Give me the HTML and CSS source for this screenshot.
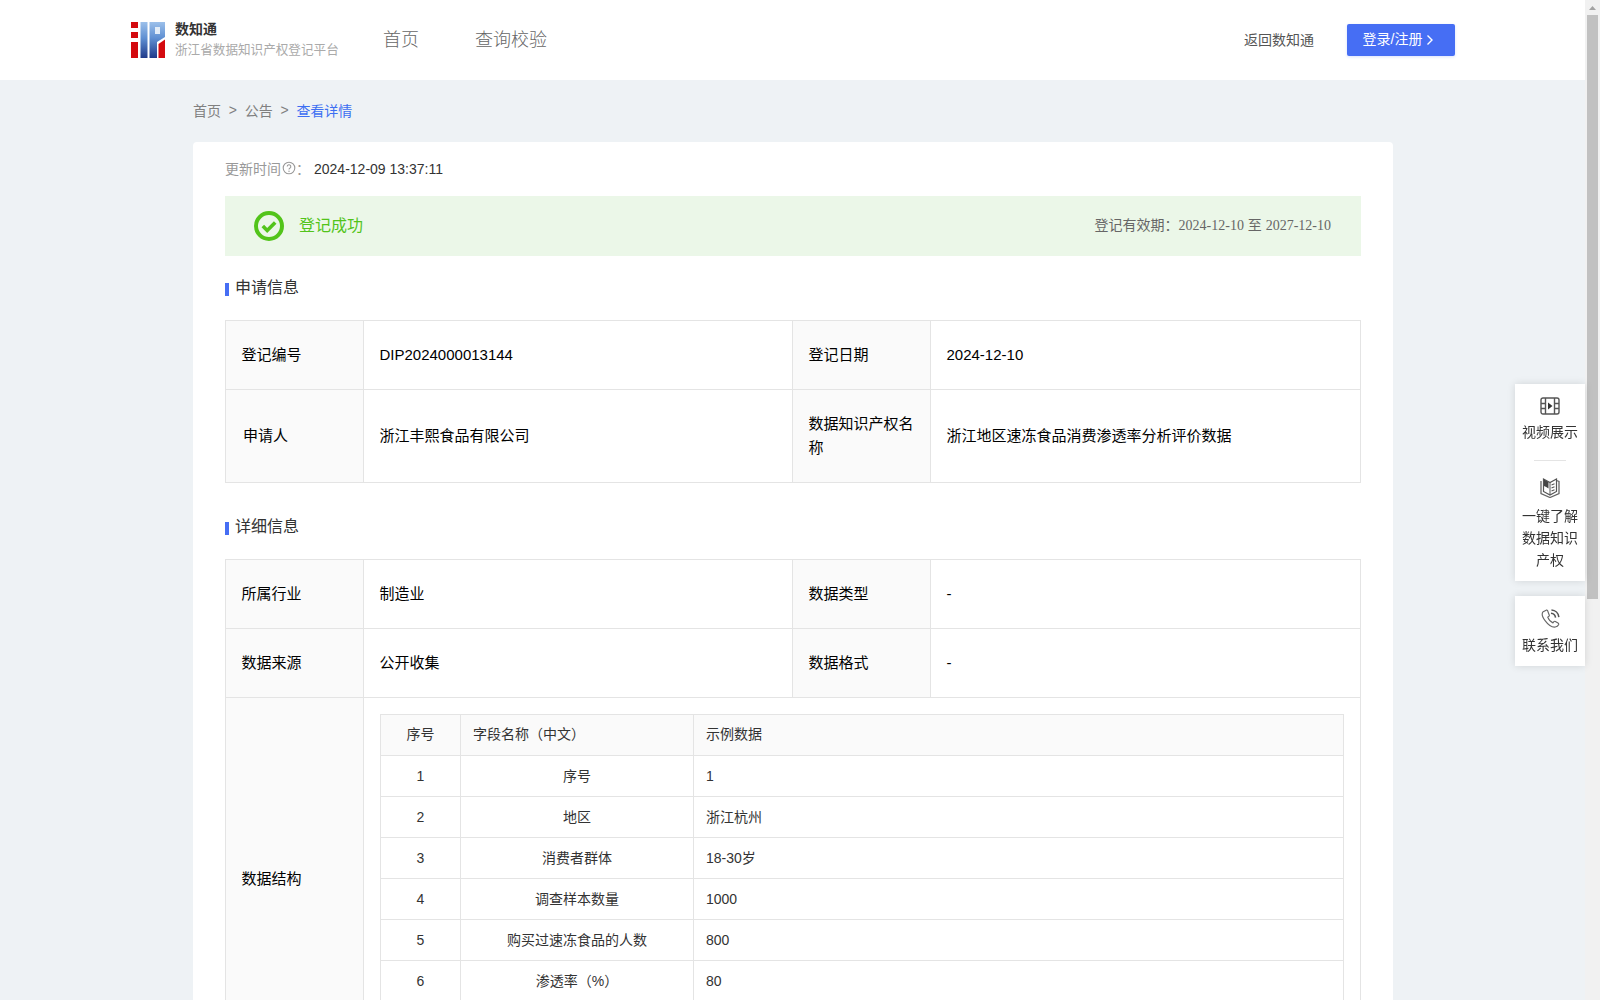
FILE: index.html
```html
<!DOCTYPE html>
<html lang="zh-CN">
<head>
<meta charset="utf-8">
<title>查看详情</title>
<link rel="stylesheet" href="styles.css">
</head>
<body>
<div class="viewport">
  <div class="page">
    <header class="header">
      <div class="brand">
        <svg class="logo" viewBox="0 0 34 36" width="34" height="36">
          <defs>
            <linearGradient id="lg" x1="0" y1="0" x2="0" y2="1">
              <stop offset="0" stop-color="#9cc0ea"/>
              <stop offset="0.45" stop-color="#5f8fd2"/>
              <stop offset="1" stop-color="#1f3a8a"/>
            </linearGradient>
            <linearGradient id="lg2" gradientUnits="userSpaceOnUse" x1="0" y1="0" x2="0" y2="36">
              <stop offset="0" stop-color="#9cc0ea"/>
              <stop offset="0.45" stop-color="#5f8fd2"/>
              <stop offset="1" stop-color="#1f3a8a"/>
            </linearGradient>
          </defs>
          <rect x="0" y="0" width="7" height="6" fill="#d40a0f"/>
          <rect x="0" y="10" width="7" height="6" fill="#d40a0f"/>
          <rect x="0" y="20" width="7" height="16" fill="#d40a0f"/>
          <rect x="9.500" y="0" width="7" height="36" fill="url(#lg)"/>
          <path d="M18.500 0H34V15L26 20V36H18.500Z" fill="url(#lg2)"/>
          <rect x="24" y="5" width="5" height="7" fill="#e3edf8"/>
          <path d="M27.500 36V22L34 17.500V36Z" fill="#d40a0f"/>
        </svg>
        <div class="brand-text">
          <div class="brand-name">数知通</div>
          <div class="brand-sub">浙江省数据知识产权登记平台</div>
        </div>
      </div>
      <nav class="nav">
        <a class="nav-item">首页</a>
        <a class="nav-item">查询校验</a>
      </nav>
      <div class="header-right">
        <a class="back-link">返回数知通</a>
        <button class="login-btn"><span class="login-text">登录/注册</span>
          <svg viewBox="0 0 8 12" width="8" height="12"><path d="M1.500 1.500 6 6l-4.500 4.500" fill="none" stroke="#fff" stroke-width="1.4"/></svg>
        </button>
      </div>
    </header>

    <main class="content">
      <div class="crumbs">
        <span>首页</span><span class="sep">&gt;</span><span>公告</span><span class="sep">&gt;</span><span class="crumb-now">查看详情</span>
      </div>

      <section class="card">
        <div class="updated">
          <span class="updated-label">更新时间</span>
          <svg class="help" viewBox="0 0 14 14" width="14" height="14"><circle cx="7" cy="7" r="5.800" fill="none" stroke="#999" stroke-width="1.100"/><path d="M5.200 5.600a1.800 1.800 0 1 1 2.600 1.600c-.6.3-.8.6-.8 1.200" fill="none" stroke="#999" stroke-width="1.100"/><circle cx="7" cy="10.200" r=".7" fill="#999"/></svg>
          <span class="updated-label">：</span>
          <span class="updated-value">2024-12-09 13:37:11</span>
        </div>

        <div class="status">
          <div class="status-main">
            <svg viewBox="0 0 30 30" width="30" height="30"><circle cx="15" cy="15" r="13" fill="none" stroke="#52c41a" stroke-width="4"/><path d="M8.800 15l4.400 4.400 8-8" fill="none" stroke="#52c41a" stroke-width="3.600"/></svg>
            <span class="status-text">登记成功</span>
          </div>
          <div class="status-date">登记有效期：<span class="serif">2024-12-10</span> 至 <span class="serif">2027-12-10</span></div>
        </div>

        <h3 class="section-title">申请信息</h3>
        <table class="info">
          <colgroup><col class="c-label"><col class="c-val"><col class="c-label"><col></colgroup>
          <tr>
            <th>登记编号</th><td>DIP2024000013144</td>
            <th>登记日期</th><td>2024-12-10</td>
          </tr>
          <tr>
            <th class="nudge">申请人</th><td>浙江丰熙食品有限公司</td>
            <th>数据知识产权名称</th><td>浙江地区速冻食品消费渗透率分析评价数据</td>
          </tr>
        </table>

        <h3 class="section-title second">详细信息</h3>
        <table class="info">
          <colgroup><col class="c-label"><col class="c-val"><col class="c-label"><col></colgroup>
          <tr>
            <th>所属行业</th><td>制造业</td>
            <th>数据类型</th><td>-</td>
          </tr>
          <tr>
            <th>数据来源</th><td>公开收集</td>
            <th>数据格式</th><td>-</td>
          </tr>
          <tr>
            <th>数据结构</th>
            <td colspan="3" class="nested-cell">
              <table class="fields">
                <colgroup><col class="f-no"><col class="f-name"><col></colgroup>
                <tr class="f-head"><th>序号</th><th class="left">字段名称（中文）</th><th class="left">示例数据</th></tr>
                <tr><td>1</td><td>序号</td><td class="left">1</td></tr>
                <tr><td>2</td><td>地区</td><td class="left">浙江杭州</td></tr>
                <tr><td>3</td><td>消费者群体</td><td class="left">18-30岁</td></tr>
                <tr><td>4</td><td>调查样本数量</td><td class="left">1000</td></tr>
                <tr><td>5</td><td>购买过速冻食品的人数</td><td class="left">800</td></tr>
                <tr><td>6</td><td>渗透率（%）</td><td class="left">80</td></tr>
                <tr><td>&nbsp;</td><td></td><td class="left"></td></tr>
              </table>
            </td>
          </tr>
        </table>
      </section>
    </main>
  </div>

  <div class="scrollbar">
    <div class="sb-arrow"><svg viewBox="0 0 7 4" width="7" height="4"><path d="M3.500 0 7 4H0Z" fill="#a3a3a3"/></svg></div>
    <div class="sb-thumb"></div>
  </div>
</div>

<aside class="float">
  <div class="float-box">
    <a class="float-item">
      <svg viewBox="0 0 20 18" width="20" height="18"><rect x="1" y="1" width="18" height="16" rx="2" fill="none" stroke="#555" stroke-width="1.400"/><path d="M5.500 1v16M14.500 1v16M1 6.500h4.500M1 11.500h4.500M14.500 6.500H19M14.500 11.500H19" stroke="#555" stroke-width="1.400" fill="none"/><path d="M8 5.500l4.500 3.500L8 12.500Z" fill="#333"/></svg>
      <span>视频展示</span>
    </a>
    <div class="float-line"></div>
    <a class="float-item">
      <svg class="book" viewBox="0 0 20 20" width="20" height="20"><path d="M1 3v12.500L10 19.500l9-4V3.500L16.500 2.500" fill="none" stroke="#666" stroke-width="1.300"/><path d="M3.500 1 10 4.500 16.500 1v12.500L10 17 3.500 13.500Z" fill="#fff" stroke="#555" stroke-width="1.200"/><path d="M10 4.500V17" stroke="#555" stroke-width="1"/><path d="M4 1.500 8.500 4v6.500L6.200 9 4 8Z" fill="#444"/><path d="M11.500 7l3-1.200M11.500 10l3-1.200M11.500 13l3-1.200" stroke="#555" stroke-width="1.100" fill="none"/></svg>
      <span>一键了解数据知识产权</span>
    </a>
  </div>
  <div class="float-box">
    <a class="float-item">
      <svg viewBox="0 0 20 20" width="19" height="19"><path d="M5.500 1.200 2.300 2.800C.6 4.500 1.500 8.500 4.500 12.500s7 7 10.500 6.500c1.500-.3 3-1.500 3.500-2.500.3-.7 0-1.300-.6-1.700l-2.800-1.700c-.6-.3-1.100-.2-1.500.3l-1 1.200c-2.300-1-4.600-3.500-5.500-6l1.300-1c.4-.4.5-.9.200-1.400L6.900 1.700c-.3-.5-.9-.7-1.400-.5Z" fill="none" stroke="#666" stroke-width="1.200"/><path d="M10.500 4.500c2.500.2 4.500 2 4.800 4.500M11 1c4 .3 7.300 3.300 7.800 7.500" fill="none" stroke="#555" stroke-width="1.600"/></svg>
      <span>联系我们</span>
    </a>
  </div>
</aside>
</body>
</html>
```
FILE: styles.css
```css
* { box-sizing: border-box; }
html, body { margin: 0; height: 100%; overflow: hidden; }
body {
  font-family: "Liberation Sans", "Noto Sans CJK SC", sans-serif;
  font-size: 14px;
  color: #333;
  background: #eef2f5;
}
.viewport { display: flex; height: 100vh; }
.page { flex: 1; min-width: 0; overflow: hidden; }

.header {
  height: 80px;
  background: #fff;
  display: flex;
  align-items: center;
  padding: 0 130px 0 131px;
}
.brand { display: flex; align-items: center; gap: 10px; width: 252px; }
.logo { display: block; flex: none; }
.brand-name { font-size: 14px; font-weight: 700; line-height: 19px; color: #333; }
.brand-sub { font-size: 12.6px; line-height: 20px; padding-top: 1px; color: #aaa; white-space: nowrap; }
.nav { display: flex; gap: 56px; padding-bottom: 4px; }
.nav-item { font-size: 18px; color: #666; font-weight: 300; }
.header-right { margin-left: auto; display: flex; align-items: center; gap: 33px; }
.back-link { color: #555; font-size: 14px; padding-bottom: 3px; }
.login-btn {
  width: 108px;
  height: 32px;
  border: 0;
  border-radius: 2px;
  background: #466ef4;
  color: #fff;
  font: inherit;
  display: flex;
  align-items: center;
  justify-content: center;
  gap: 4px;
  padding: 0 5px 0 0;
  box-shadow: 0 1px 3px rgba(70, 110, 244, .2);
}
.login-text { padding-bottom: 4px; }

.content { width: 1200px; margin-left: 193px; }
.crumbs { height: 62px; display: flex; align-items: center; gap: 7.75px; color: #808080; padding-bottom: 3px; }
.crumb-now { color: #3d6ff2; }
.sep { color: #808080; }

.card {
  background: #fff;
  border-radius: 4px 4px 0 0;
  padding: 16px 32px 32px;
}
.updated { display: flex; align-items: center; height: 20px; color: #999; }
.updated-label { color: #999; }
.help { margin: 0 0 0 1px; }
.updated-value { color: #333; margin-left: 4px; padding-top: 1px; }

.status {
  margin-top: 18px;
  height: 60px;
  background: #ebf7e8;
  display: flex;
  align-items: center;
  justify-content: space-between;
  padding: 0 30px 0 29px;
}
.status-main { display: flex; align-items: center; gap: 15px; }
.status-main svg { display: block; }
.status-text { font-size: 16px; color: #52c41a; padding-bottom: 4px; }
.status-date { color: #666; padding-bottom: 4px; }
.serif { font-family: "Liberation Serif", serif; }

.section-title {
  margin: 22px 0 22px;
  height: 20px;
  font-size: 16px;
  line-height: 20px;
  font-weight: 400;
  color: #333;
  display: flex;
  align-items: center;
  gap: 6px;
}
.section-title::before {
  content: "";
  width: 4px;
  height: 13px;
  background: #466ef4;
  margin-top: 2px;
}
.section-title.second { margin-top: 34px; }

.info {
  width: 100%;
  table-layout: fixed;
  border-collapse: collapse;
  color: #000;
  font-size: 15px;
}
.c-label { width: 138px; }
.c-val { width: 429px; }
.info > tbody > tr > th,
.info > tbody > tr > td {
  border: 1px solid #e4e4e4;
  padding: 22px 16px 22px 15.5px;
  line-height: 24px;
  text-align: left;
  font-weight: 400;
}
.info > tbody > tr > th { background: #fafafa; }
.info > tbody > tr > th.nudge { padding-left: 17px; }
.info > tbody > tr > td.nested-cell { padding: 16px; }

.fields {
  width: 100%;
  table-layout: fixed;
  border-collapse: collapse;
  color: #333;
  font-size: 14px;
}
.f-no { width: 80px; }
.f-name { width: 233px; }
.fields th, .fields td {
  border: 1px solid #e4e4e4;
  height: 41px;
  padding: 0 12px 1px;
  text-align: center;
  font-weight: 400;
  line-height: 20px;
}
.fields th { background: #fafafa; padding-bottom: 2px; }
.fields .left { text-align: left; }

.scrollbar { width: 15px; flex: none; background: #f1f1f1; display: flex; flex-direction: column; align-items: center; }
.sb-arrow { height: 15px; display: flex; align-items: center; justify-content: center; flex: none; }
.sb-thumb { width: 11px; height: 584px; background: #c1c1c1; }

.float { position: fixed; right: 15px; top: 384px; width: 70px; display: flex; flex-direction: column; gap: 15px; }
.float-box { background: #fff; box-shadow: 0 0 8px rgba(0, 0, 0, .12); padding: 13px 0 10px; }
.float-item {
  display: flex;
  flex-direction: column;
  align-items: center;
  gap: 6px;
  color: #333;
  text-align: center;
  line-height: 22px;
  padding: 0 6px;
}
.float-item svg { display: block; }
.float-item .book { margin-bottom: 1px; }
.float-line { width: 32px; height: 1px; background: #e4e4e4; margin: 17px auto; }
```
